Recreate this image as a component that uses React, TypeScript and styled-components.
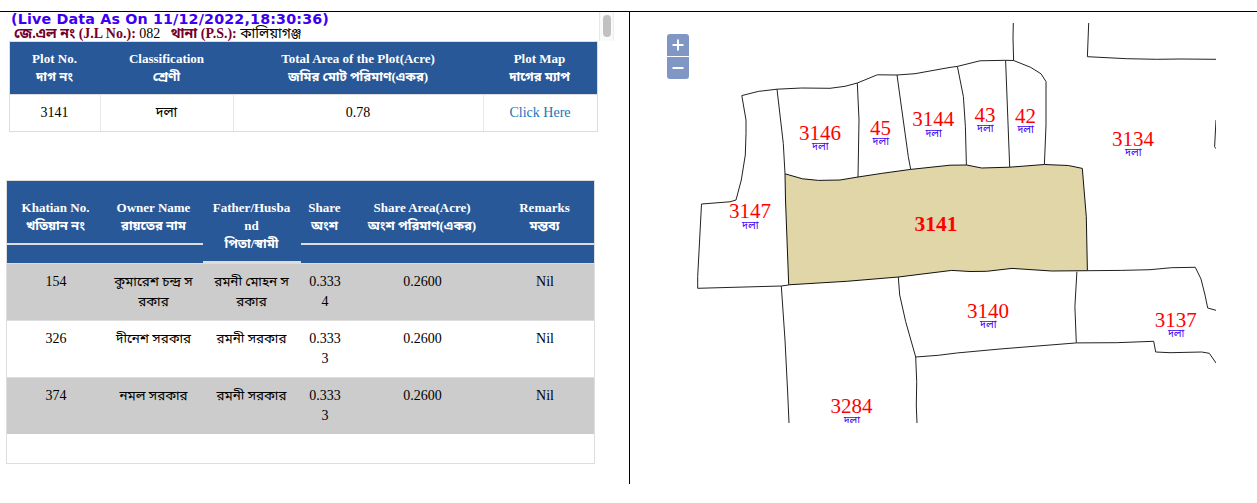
import React from "react";
import styled, { createGlobalStyle } from "styled-components";

const GlobalStyle = createGlobalStyle`
  body { margin: 0; background: #fff; }
  * { box-sizing: border-box; }
`;

const serif = `"Liberation Serif", "Noto Sans Bengali", "Noto Sans", serif`;

const Page = styled.div`
  width: 1257px;
  height: 503px;
  padding-top: 11px;
  overflow: hidden;
  font-family: ${serif};
  color: #000;
`;

const Split = styled.div`
  display: flex;
  height: 473px;
  border-top: 1px solid #000;
`;

const InfoPanel = styled.section`
  width: 630px;
  padding-left: 6px;
  border-right: 1px solid #000;
`;

const TopBar = styled.div`
  display: flex;
  justify-content: space-between;
  height: 29px;
  padding-left: 5px;
  padding-right: 15px;
`;

const LiveStamp = styled.div`
  height: 14px;
  font: bold 14.3px/15px "DejaVu Sans", sans-serif;
  letter-spacing: 0.15px;
  color: #3d00f5;
  white-space: nowrap;
`;

const Locality = styled.div`
  height: 15px;
  padding-left: 3px;
  font-size: 14px;
  line-height: 15px;
  white-space: pre;
`;

const Caption = styled.b`
  color: #75002b;
`;

const ScrollTrack = styled.div`
  width: 15px;
  height: 29px;
  padding: 3px 3px 0;
  background: #fafafa;
  border-left: 1px solid #e8e8e8;
  border-right: 1px solid #ededed;
`;

const ScrollThumb = styled.div`
  width: 8px;
  height: 22px;
  border-radius: 4px;
  background: #c1c1c1;
`;

const PlotTable = styled.div`
  width: 589px;
  margin-left: 3px;
  border: 1px solid #ddd;
`;

const PlotRow = styled.div<{ $head?: boolean }>`
  display: grid;
  grid-template-columns: 91px 133px 250px 113px;
  height: ${(p) => (p.$head ? 52 : 37)}px;
  color: ${(p) => (p.$head ? "#fff" : "#000")};
  background: ${(p) => (p.$head ? "#285897" : "#fff")};
  ${(p) => !p.$head && "border-top: 1px solid #ddd;"}
`;

const PlotHead = styled.div`
  padding: 8px 2px 0 0;
  font-size: 13px;
  font-weight: bold;
  line-height: 18px;
  text-align: center;
`;

const PlotCell = styled.div`
  padding-right: 1px;
  border-right: 1px solid #e8e8e8;
  font-size: 14px;
  line-height: 35px;
  text-align: center;
  &:last-child { border-right: 0; }
`;

const MapLink = styled.a`
  color: #1c75bc;
`;

const OwnerTable = styled.div`
  width: 589px;
  height: 284px;
  margin-top: 48px;
  border: 1px solid #ddd;
`;

const OwnerRow = styled.div<{ $tone: string; $height: number }>`
  display: grid;
  grid-template-columns: 98px 98px 98px 48px 147px 98px;
  align-items: start;
  height: ${(p) => p.$height}px;
  background: ${(p) => p.$tone};
  border-bottom: 1px solid #ddd;
  &:last-child {
    height: ${(p) => p.$height - 1}px;
    border-bottom: 0;
  }
`;

const OwnerHead = styled.div<{ $tall?: boolean }>`
  height: ${(p) => (p.$tall ? 82 : 64)}px;
  padding: 18px 1px 0 0;
  border-bottom: 2px solid #ddd;
  font-size: 13px;
  font-weight: bold;
  line-height: 18px;
  text-align: center;
  color: #fff;
`;

const OwnerCell = styled.div<{ $bengali?: boolean }>`
  padding-top: 8px;
  padding-right: ${(p) => (p.$bengali ? 1 : 0)}px;
  font-size: ${(p) => (p.$bengali ? 13.4 : 14)}px;
  line-height: 20px;
  text-align: center;
`;

const Line = styled.div<{ $height?: number }>`
  white-space: nowrap;
  ${(p) => p.$height && `height: ${p.$height}px; line-height: ${p.$height}px;`}
`;

const MapPanel = styled.section`
  position: relative;
  padding: 11px 0 0 29px;
`;

const MapDrawing = styled.svg`
  display: block;
  width: 557px;
  height: 400px;
  font-family: ${serif};
`;

const ZoomControl = styled.div`
  position: absolute;
  top: 22px;
  left: 37px;
  display: grid;
  gap: 1px;
`;

const ZoomButton = styled.button<{ $edge: "top" | "bottom" }>`
  display: flex;
  align-items: center;
  justify-content: center;
  width: 22px;
  height: 22px;
  padding: 0;
  border: 0;
  color: #fff;
  background: #8097c6;
  border-radius: ${(p) => (p.$edge === "top" ? "3px 3px 0 0" : "0 0 3px 3px")};
`;

const owners = [
  { id: "154", name: ["কুমারেশ চন্দ্র স", "রকার"], father: ["রমনী মোহন স", "রকার"], share: ["0.333", "4"] },
  { id: "326", name: ["দীনেশ সরকার"], father: ["রমনী সরকার"], share: ["0.333", "3"] },
  { id: "374", name: ["নমল সরকার"], father: ["রমনী সরকার"], share: ["0.333", "3"] },
];

const ownerHeads = [
  ["Khatian No.", "খতিয়ান নং"],
  ["Owner Name", "রায়তের নাম"],
  ["Father/Husba", "nd", "পিতা/স্বামী"],
  ["Share", "অংশ"],
  ["Share Area(Acre)", "অংশ পরিমাণ(একর)"],
  ["Remarks", "মন্তব্য"],
];

const plotHeads = [
  ["Plot No.", "দাগ নং"],
  ["Classification", "শ্রেণী"],
  ["Total Area of the Plot(Acre)", "জমির মোট পরিমাণ(একর)"],
  ["Plot Map", "দাগের ম্যাপ"],
];

const boundaries = [
  "741.8,95.6 758.3,91.4 777,89.2 801.7,88 830,88.3 845,86.3 857.3,83 877.3,74.8 897,75 915,73.7 950,67.4 957.4,66.4 980,60.8 1005.6,60.3 1013.6,60.5 1030.6,67.3 1041,73.8 1046,81.5 1046,125 1044.4,164.5",
  "741.8,95.6 746,120 746,133.5 745.3,155 741.3,180 736,200 730,201.8 701.5,204 697.7,276.5 697.7,288.3 781.3,286 788.7,285",
  "777,89.2 783.3,143.5 785,173.8",
  "857.3,83 859,120 858,177",
  "897,75 908.3,156.7 910.7,169.4",
  "957.4,66.4 963.4,96.7 965.4,126.7 966.4,165",
  "1005.6,60.3 1009.7,167.2",
  "1013.3,23 1013,38 1013.6,60.5",
  "1088.7,23 1087.4,56.7 1126.7,58.7 1156.7,59.3 1180,59 1216,59.3",
  "1216,120 1214.6,146.7 1216,148.7",
  "781.3,286 785,340 787.7,393 789,423",
  "898.3,277 899.7,295 905.7,321.7 915.7,357 916.7,381.7 916.3,406 917,423",
  "915.7,357 938.3,355.3 956.7,353 1000,349 1076.7,342.9 1116.7,342.7 1153.7,341.3 1155.7,352 1170,352.7 1201.7,352 1209.3,353.3 1216,363",
  "1076.9,271.7 1074.9,306.7 1076.3,342.7",
  "1087.4,270.7 1121.7,270.4 1150,269.7 1171.7,267.7 1195.3,267.3 1201,279 1205,295 1207.7,308 1216,310.3",
];

const selectedPlot =
  "785,173.8 802.5,178.8 818.5,180.4 840,180 858,177 881.7,173.4 910.7,169.4 950,165.2 966.5,165 981.7,168 1009.7,167.2 1044.4,164.5 1068.4,165.5 1082.3,168.4 1086.3,216.7 1087.4,270.7 1051.7,271 1012,268.4 986.7,271.3 970,271.5 951.7,270.4 898.3,277 846.7,281.3 788.7,284.8 785.5,200";

const plots: [string, number, number][] = [
  ["3146", 820, 139.5],
  ["45", 880.5, 134.5],
  ["3144", 933.3, 126],
  ["43", 985, 121.8],
  ["42", 1025.4, 122.8],
  ["3134", 1133, 145.7],
  ["3147", 750, 218],
  ["3140", 988, 317.7],
  ["3137", 1175.8, 326.8],
  ["3284", 851.6, 413],
];

const Lines = ({ items, heights }: { items: string[]; heights?: number }) => (
  <>
    {items.map((t) => (
      <Line key={t} $height={heights}>{t}</Line>
    ))}
  </>
);

export default function App() {
  return (
    <>
      <GlobalStyle />
      <Page>
        <Split>
          <InfoPanel>
            <TopBar>
              <div>
                <LiveStamp>(Live Data As On 11/12/2022,18:30:36)</LiveStamp>
                <Locality>
                  <Caption>জে.এল নং (J.L No.):</Caption>
                  {" 082   "}
                  <Caption>থানা (P.S.):</Caption>
                  {" কালিয়াগঞ্জ"}
                </Locality>
              </div>
              <ScrollTrack>
                <ScrollThumb />
              </ScrollTrack>
            </TopBar>
            <PlotTable>
              <PlotRow $head>
                {plotHeads.map((h) => (
                  <PlotHead key={h[0]}>
                    <Lines items={h} heights={18} />
                  </PlotHead>
                ))}
              </PlotRow>
              <PlotRow>
                <PlotCell>3141</PlotCell>
                <PlotCell>দলা</PlotCell>
                <PlotCell>0.78</PlotCell>
                <PlotCell>
                  <MapLink>Click Here</MapLink>
                </PlotCell>
              </PlotRow>
            </PlotTable>
            <OwnerTable>
              <OwnerRow $tone="#285897" $height={83}>
                {ownerHeads.map((h) => (
                  <OwnerHead key={h[0]} $tall={h.length > 2}>
                    <Lines items={h} heights={18} />
                  </OwnerHead>
                ))}
              </OwnerRow>
              {owners.map((o, i) => (
                <OwnerRow key={o.id} $tone={i % 2 ? "#fff" : "#ccc"} $height={57}>
                  <OwnerCell>{o.id}</OwnerCell>
                  <OwnerCell $bengali><Lines items={o.name} heights={20} /></OwnerCell>
                  <OwnerCell $bengali><Lines items={o.father} heights={20} /></OwnerCell>
                  <OwnerCell><Lines items={o.share} heights={20} /></OwnerCell>
                  <OwnerCell>0.2600</OwnerCell>
                  <OwnerCell>Nil</OwnerCell>
                </OwnerRow>
              ))}
            </OwnerTable>
          </InfoPanel>
          <MapPanel>
            <MapDrawing viewBox="659 23 557 400">
              <g fill="none" stroke="#222" strokeWidth="1">
                {boundaries.map((points) => (
                  <polyline key={points} points={points} />
                ))}
              </g>
              <polygon points={selectedPlot} fill="#e0d6a8" stroke="#111" strokeWidth="1" />
              <g textAnchor="middle">
                {plots.map(([label, x, y]) => (
                  <React.Fragment key={label}>
                    <text x={x} y={y} fontSize="21" fill="#f00">{label}</text>
                    <text x={x + 0.3} y={y + 10.5} fontSize="10.6" fill="#3d00f5">দলা</text>
                  </React.Fragment>
                ))}
                <text x="936" y="231" fontSize="21.5" fontWeight="bold" fill="#f00">3141</text>
              </g>
            </MapDrawing>
            <ZoomControl>
              <ZoomButton $edge="top" aria-label="Zoom in">
                <svg width="12" height="12" stroke="currentColor" strokeWidth="2">
                  <path d="M0.5 6H11.5M6 0.5V11.5" />
                </svg>
              </ZoomButton>
              <ZoomButton $edge="bottom" aria-label="Zoom out">
                <svg width="12" height="12" stroke="currentColor" strokeWidth="2">
                  <path d="M0.5 6H11.5" />
                </svg>
              </ZoomButton>
            </ZoomControl>
          </MapPanel>
        </Split>
      </Page>
    </>
  );
}
